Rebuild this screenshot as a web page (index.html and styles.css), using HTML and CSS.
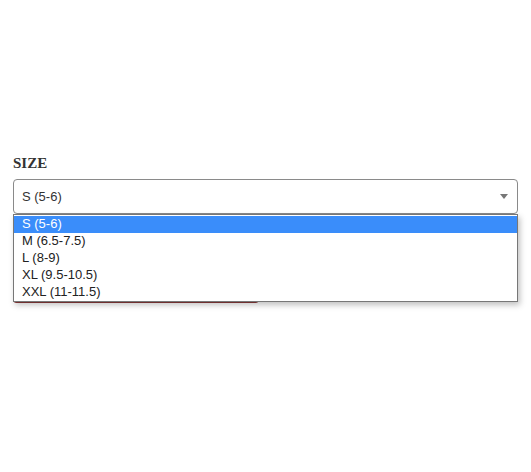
FILE: index.html
```html
<!DOCTYPE html>
<html lang="en">
<head>
  <meta charset="UTF-8">
  <meta name="viewport" content="width=device-width, initial-scale=1.0">
  <title>Size</title>
  <link rel="stylesheet" href="styles.css">
</head>
<body>
  <div class="field">
    <div class="label">SIZE</div>
    <div class="select-wrap">
      <div class="select">
        <span>S (5-6)</span>
        <span class="arrow"></span>
      </div>
      <ul class="options">
        <li class="active">S (5-6)</li>
        <li>M (6.5-7.5)</li>
        <li>L (8-9)</li>
        <li>XL (9.5-10.5)</li>
        <li>XXL (11-11.5)</li>
      </ul>
    </div>
    <button type="button" class="add-btn">Add to cart</button>
  </div>
</body>
</html>
```

FILE: styles.css
```css
body {
  margin: 0;
  min-height: 472px;
  background-color: #fff;
  font-family: 'Liberation Sans', Arial, sans-serif;
}

.field {
  padding: 155px 13px 0 13px;
}

.label {
  font-family: 'Liberation Serif', serif;
  font-weight: bold;
  font-size: 15px;
  color: #333;
  height: 24px;
  line-height: 16px;
}

.select-wrap {
  position: relative;
  width: 505px;
}

.select {
  display: flex;
  align-items: center;
  justify-content: space-between;
  height: 33px;
  padding: 0 9px 0 8px;
  border: 1px solid #8a8a8a;
  border-radius: 4px;
  font-size: 13px;
  color: #333;
}

.arrow {
  width: 0;
  height: 0;
  border-left: 4px solid transparent;
  border-right: 4px solid transparent;
  border-top: 5px solid #777;
}

.options {
  position: absolute;
  top: 35px;
  left: 0;
  right: 0;
  z-index: 2;
  list-style-type: none;
  margin: 0;
  padding: 1px 0 0 0;
  background-color: #fff;
  border: 1px solid #777;
  box-shadow: 2px 3px 6px rgba(0, 0, 0, 0.25);
}

.options li {
  height: 17px;
  line-height: 16px;
  padding-left: 8px;
  font-size: 13px;
  color: #222;
}

.options li.active {
  background-color: #3a8dfa;
  color: #fff;
}

.add-btn {
  display: block;
  width: 246px;
  height: 44px;
  margin-top: 45px;
  border: 1px solid #8b3a3a;
  border-radius: 3px;
  background-color: #fff;
  color: #8b3a3a;
}
```
